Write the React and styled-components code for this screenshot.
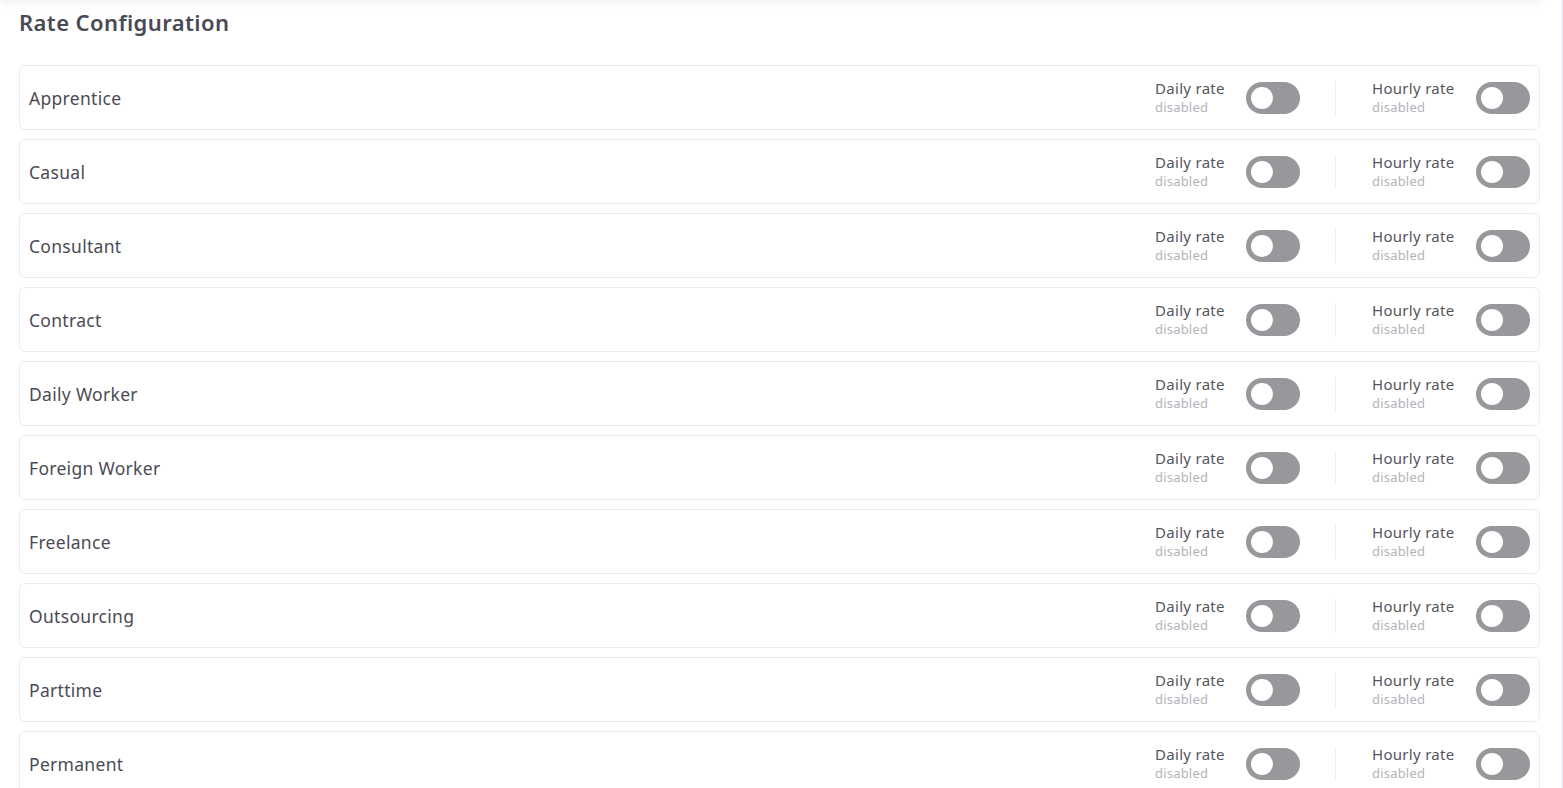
import styled, { createGlobalStyle } from 'styled-components'

const GlobalStyle = createGlobalStyle`
  html, body {
    margin: 0;
    padding: 0;
    background: #ffffff;
    font-family: 'Noto Sans', 'Open Sans', sans-serif;
    color: #4a4a55;
  }
  * {
    box-sizing: border-box;
  }
`

const Page = styled.div`
  position: relative;
  width: 1563px;
  height: 788px;
  overflow: hidden;
  border-right: 1px solid #e4e2ea;
  background: #ffffff;

  &::before {
    content: '';
    position: absolute;
    top: -12px;
    left: 0;
    right: 20px;
    height: 12px;
    box-shadow: 0 2px 8px rgba(0, 0, 0, 0.07);
  }
`

const Content = styled.div`
  padding: 7px 22px 0 19px;
`

const Title = styled.h1`
  margin: 0 0 27px;
  font-size: 22px;
  line-height: 31px;
  font-weight: 600;
  color: #4a4a55;
  letter-spacing: 0.4px;
`

const List = styled.div`
  display: flex;
  flex-direction: column;
  gap: 9px;
`

const Card = styled.div`
  display: flex;
  align-items: center;
  justify-content: space-between;
  height: 65px;
  padding: 0 9px 0 9px;
  border: 1px solid #ececf0;
  border-radius: 6px;
  background: #fff;
`

const Label = styled.div`
  font-size: 17.5px;
  font-weight: 400;
  letter-spacing: 0.3px;
  color: #4b4b55;
`

const Options = styled.div`
  display: flex;
  align-items: center;
`

const Divider = styled.div`
  width: 1px;
  height: 34px;
  background: #ededf0;
  margin: 0 36px 0 35px;
`

const Option = styled.div`
  display: flex;
  align-items: center;
  gap: 18px;
`

const OptionText = styled.div`
  display: flex;
  flex-direction: column;
  width: ${p => p.$width}px;
`

const OptionName = styled.span`
  font-size: 15px;
  line-height: 19px;
  letter-spacing: 0.3px;
  color: #55555e;
`

const OptionState = styled.span`
  font-size: 13px;
  line-height: 19px;
  letter-spacing: 0.2px;
  color: #b3b3ba;
`

const Toggle = styled.div`
  position: relative;
  width: 54px;
  height: 32px;
  border-radius: 16px;
  background: #98979c;

  &::after {
    content: '';
    position: absolute;
    top: 5px;
    left: 5px;
    width: 22px;
    height: 22px;
    border-radius: 50%;
    background: #ffffff;
  }
`

const types = [
  'Apprentice',
  'Casual',
  'Consultant',
  'Contract',
  'Daily Worker',
  'Foreign Worker',
  'Freelance',
  'Outsourcing',
  'Parttime',
  'Permanent',
]

function RateOption({ name, width }) {
  return (
    <Option>
      <OptionText $width={width}>
        <OptionName>{name}</OptionName>
        <OptionState>disabled</OptionState>
      </OptionText>
      <Toggle />
    </Option>
  )
}

export default function App() {
  return (
    <>
      <GlobalStyle />
      <Page>
        <Content>
          <Title>Rate Configuration</Title>
          <List>
            {types.map(type => (
              <Card key={type}>
                <Label>{type}</Label>
                <Options>
                  <RateOption name="Daily rate" width={73} />
                  <Divider />
                  <RateOption name="Hourly rate" width={86} />
                </Options>
              </Card>
            ))}
          </List>
        </Content>
      </Page>
    </>
  )
}
